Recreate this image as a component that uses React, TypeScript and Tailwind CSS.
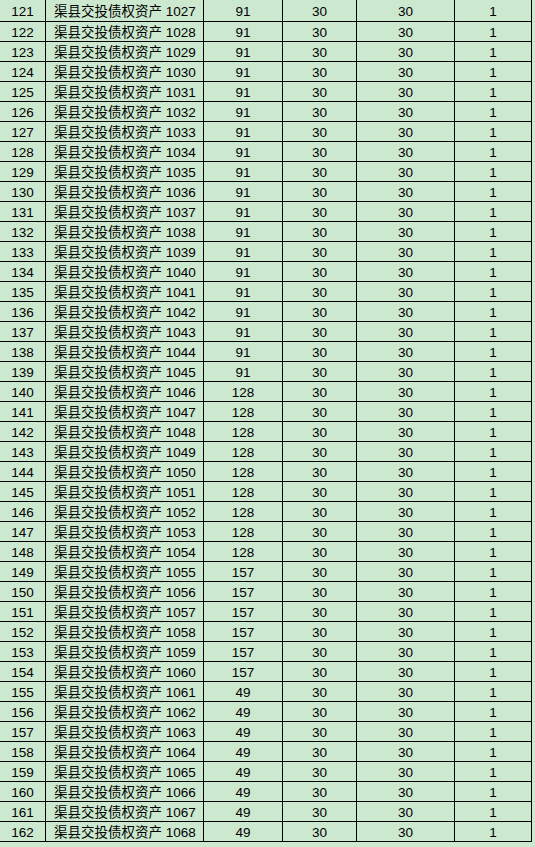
const rows = Array.from({ length: 42 }, (_, i) => {
  const n = 121 + i
  let price = 91
  if (n >= 140 && n <= 148) price = 128
  else if (n >= 149 && n <= 154) price = 157
  else if (n >= 155) price = 49
  return { n, name: `渠县交投债权资产 ${n + 906}`, price }
})

export default function App() {
  return (
    <div
      className="w-[535px] h-[847px] overflow-hidden bg-[#cce8cf] text-[13.5px] text-black"
      style={{ fontFamily: '"Liberation Sans", "Noto Sans CJK SC", sans-serif' }}
    >
      <div className="w-[532px]">
        {rows.map((r, i) => (
          <div
            key={r.n}
            className={`flex border-b border-black ${i === 0 ? 'h-[22px]' : 'h-[20px]'}`}
          >
            <div className="w-[46px] border-r border-black flex items-center justify-center pt-[3px]">
              {r.n}
            </div>
            <div className="w-[158px] border-r border-black flex items-center pl-[8px] pt-[3px] whitespace-nowrap">
              {r.name}
            </div>
            <div className="w-[79px] border-r border-black flex items-center justify-center pt-[3px]">
              {r.price}
            </div>
            <div className="w-[74px] border-r border-black flex items-center justify-center pt-[3px]">
              30
            </div>
            <div className="w-[98px] border-r border-black flex items-center justify-center pt-[3px]">
              30
            </div>
            <div className="w-[77px] border-r border-black flex items-center justify-center pt-[3px]">
              1
            </div>
          </div>
        ))}
      </div>
    </div>
  )
}
